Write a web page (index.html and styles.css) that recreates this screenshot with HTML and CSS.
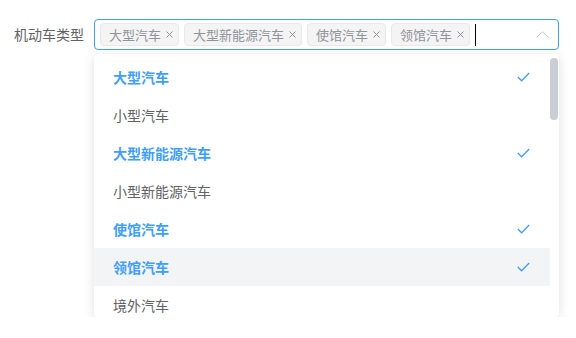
FILE: index.html
```
<!DOCTYPE html>
<html lang="zh-CN">
<head>
    <meta charset="UTF-8">
    <meta name="viewport" content="width=device-width, initial-scale=1.0">
    <title>机动车类型</title>
    <link rel="stylesheet" href="styles.css">
</head>
<body>
    <div class="form">
        <label class="form-label">机动车类型</label>
        <div class="select">
            <div class="select-input">
                <span class="tag">大型汽车<i class="tag-close"><svg viewBox="0 0 7 7" width="7" height="7"><path d="M0.5 0.5L6.5 6.5M6.5 0.5L0.5 6.5" stroke="#909399" stroke-width="1" fill="none"/></svg></i></span>
                <span class="tag">大型新能源汽车<i class="tag-close"><svg viewBox="0 0 7 7" width="7" height="7"><path d="M0.5 0.5L6.5 6.5M6.5 0.5L0.5 6.5" stroke="#909399" stroke-width="1" fill="none"/></svg></i></span>
                <span class="tag">使馆汽车<i class="tag-close"><svg viewBox="0 0 7 7" width="7" height="7"><path d="M0.5 0.5L6.5 6.5M6.5 0.5L0.5 6.5" stroke="#909399" stroke-width="1" fill="none"/></svg></i></span>
                <span class="tag">领馆汽车<i class="tag-close"><svg viewBox="0 0 7 7" width="7" height="7"><path d="M0.5 0.5L6.5 6.5M6.5 0.5L0.5 6.5" stroke="#909399" stroke-width="1" fill="none"/></svg></i></span>
                <span class="caret"></span>
                <svg class="arrow" viewBox="0 0 13 7" width="13" height="7"><path d="M0.5 6.5L6.5 0.8L12.5 6.5" stroke="#c0c4cc" stroke-width="1" fill="none"/></svg>
            </div>

            <!-- 下拉选项 -->
            <div class="dropdown">
                <ul class="options">
                    <li class="option selected">大型汽车<svg class="check" viewBox="0 0 13 10" width="13" height="10"><path d="M0.8 5L4.6 8.8L12.2 1" stroke="#409eff" stroke-width="1.3" fill="none"/></svg></li>
                    <li class="option">小型汽车</li>
                    <li class="option selected">大型新能源汽车<svg class="check" viewBox="0 0 13 10" width="13" height="10"><path d="M0.8 5L4.6 8.8L12.2 1" stroke="#409eff" stroke-width="1.3" fill="none"/></svg></li>
                    <li class="option">小型新能源汽车</li>
                    <li class="option selected">使馆汽车<svg class="check" viewBox="0 0 13 10" width="13" height="10"><path d="M0.8 5L4.6 8.8L12.2 1" stroke="#409eff" stroke-width="1.3" fill="none"/></svg></li>
                    <li class="option selected active">领馆汽车<svg class="check" viewBox="0 0 13 10" width="13" height="10"><path d="M0.8 5L4.6 8.8L12.2 1" stroke="#409eff" stroke-width="1.3" fill="none"/></svg></li>
                    <li class="option">境外汽车</li>
                </ul>
                <div class="scrollbar"><div class="thumb"></div></div>
            </div>
        </div>
    </div>
</body>
</html>
```

FILE: styles.css
```
body {
    margin: 0;
    background: #fff;
    font-family: "Noto Sans CJK SC", "Noto Sans", sans-serif;
}
.form {
    display: flex;
    align-items: flex-start;
    padding: 19px 0 0 14px;
}
.form-label {
    width: 80px;
    font-size: 14px;
    line-height: 31px;
    color: #606266;
}
.select {
    display: flex;
    flex-direction: column;
    width: 465px;
}
.select-input {
    display: flex;
    align-items: center;
    gap: 5px;
    height: 31px;
    box-sizing: border-box;
    padding-left: 5px;
    border: 1px solid #409eff;
    border-radius: 4px;
}
.tag {
    display: flex;
    align-items: center;
    height: 23px;
    box-sizing: border-box;
    padding: 0 5px 0 8px;
    background: #f4f4f5;
    border: 1px solid #e9e9eb;
    border-radius: 4px;
    font-size: 13px;
    color: #909399;
    line-height: 21px;
}
.tag-close {
    display: flex;
    margin-left: 5px;
}
.caret {
    width: 1px;
    height: 22px;
    background: #000;
}
.arrow {
    margin-left: auto;
    margin-right: 9px;
}
.dropdown {
    display: flex;
    height: 263px;
    box-sizing: border-box;
    margin-top: 4px;
    padding-top: 4px;
    background: #fff;
    border-radius: 4px;
    box-shadow: 0 2px 12px rgba(0, 0, 0, 0.12);
    overflow: hidden;
}
.options {
    flex: 1;
    margin: 0;
    padding: 0;
    list-style: none;
}
.option {
    display: flex;
    align-items: center;
    justify-content: space-between;
    height: 38px;
    padding: 0 20px 0 19px;
    font-size: 14px;
    color: #606266;
}
.option.selected {
    color: #409eff;
    font-weight: 700;
}
.option.active {
    background: #f3f4f6;
}
.scrollbar {
    width: 8px;
    margin-right: 1px;
}
.thumb {
    height: 62px;
    background: #c9cdd4;
    border-radius: 4px;
}
```
